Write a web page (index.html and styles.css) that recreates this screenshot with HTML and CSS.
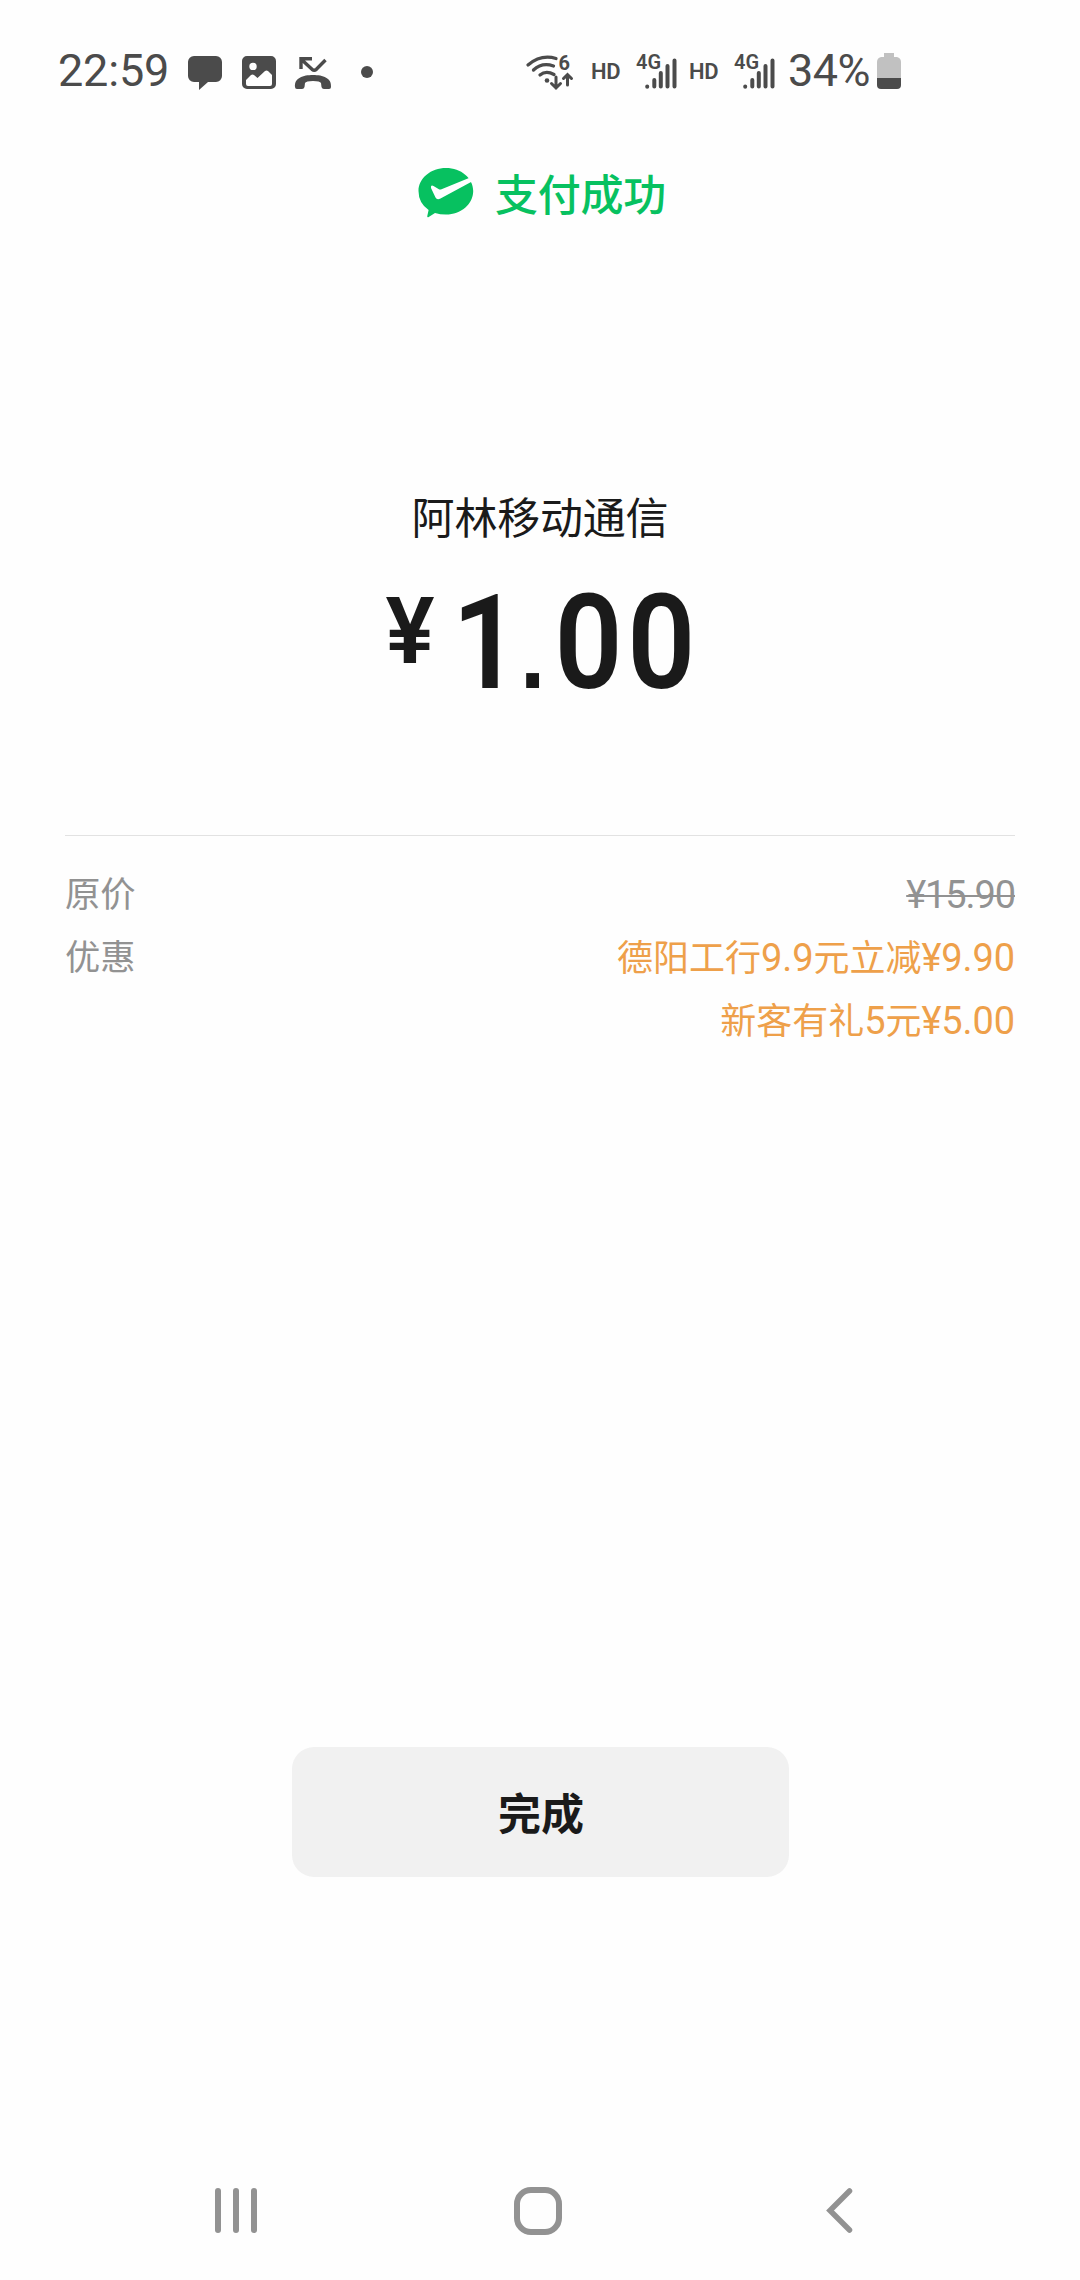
FILE: index.html
```html
<!DOCTYPE html>
<html lang="zh-CN">
<head>
<meta charset="utf-8">
<title>支付成功</title>
<link rel="stylesheet" href="styles.css">
</head>
<body>
<div class="screen">
  <header class="status-bar">
    <span class="clock">22:59</span>
    <svg class="notifications" width="192" height="40" viewBox="184 50 192 40" fill="#4b4b4b">
      <path d="M194 55H216a6 6 0 0 1 6 6V75a6 6 0 0 1-6 6H208L199 89V81H194a6 6 0 0 1-6-6V61a6 6 0 0 1 6-6Z"/>
      <path fill-rule="evenodd" d="M247 55H271a5 5 0 0 1 5 5V83a5 5 0 0 1-5 5H247a5 5 0 0 1-5-5V60a5 5 0 0 1 5-5ZM253 61.700a3.700 3.700 0 1 0 0 7.400a3.700 3.700 0 1 0 0-7.400ZM246 79V83Q246 85 248 85H270Q272 85 272 83V74L268 70Q266.500 69 265 70L257.500 77L254 74Q252.500 73 251 74Z"/>
      <path d="M301 68V57.800H312M302 59L312 68.300Q314.200 70 316.400 68.300L325.500 59" fill="none" stroke="#4b4b4b" stroke-width="3.400"/>
      <path d="M295 86C294 77 303 74 313 74S332 77 331 86Q331 88 329 88H324Q322 88 321.500 86L321 82Q320 80 313 80T305 82L304.500 86Q304 88 302 88H297Q295 88 295 86Z"/>
      <circle cx="367" cy="71" r="6"/>
    </svg>
    <svg class="wifi" width="50" height="40" viewBox="525 50 50 40" fill="none" stroke="#4b4b4b" stroke-width="3.300" stroke-linecap="round">
      <path d="M528 64Q541 53 556 57.500M533.500 69Q542 61 553.500 65M540 74Q546 69 554 73.500"/>
      <circle cx="547" cy="79.500" r="2.300" fill="#4b4b4b" stroke="none"/>
      <path d="M556 76V87M551.500 82.500L556 87L560.500 82.500M567.500 84V73.500M563.500 77.500L567.500 73.500L571.500 77.500" stroke-width="3"/>
      <text class="wifi-version" x="558.500" y="69">6</text>
    </svg>
    <span class="hd">HD</span>
    <span class="network"><span class="generation">4G</span><svg class="signal" width="32" height="32" viewBox="0 0 32 32" stroke="#4b4b4b" stroke-width="4" stroke-linecap="round"><path d="M2.200 28.600V28.700M9.300 22V28.500M15.800 15V28.500M22.500 8V28.500M29.500 2.500V28.500"/></svg></span>
    <span class="hd">HD</span>
    <span class="network"><span class="generation">4G</span><svg class="signal" width="32" height="32" viewBox="0 0 32 32" stroke="#4b4b4b" stroke-width="4" stroke-linecap="round"><path d="M2.200 28.600V28.700M9.300 22V28.500M15.800 15V28.500M22.500 8V28.500M29.500 2.500V28.500"/></svg></span>
    <span class="percent">34%</span>
    <svg width="24" height="36" viewBox="0 0 24 36"><path d="M7 0H17V4H20Q24 5 24 9V25H0V9Q0 5 4 4H7Z" fill="#c1c1c1"/><path d="M0 25H24V32Q24 36 20 36H4Q0 36 0 32Z" fill="#4b4b4b"/></svg>
  </header>

  <main class="payment">
    <div class="result">
      <svg width="56" height="50" viewBox="418 168 56 50">
        <path fill="#07c160" d="M446 168C461 168 473.200 178 473.200 191S461 214.500 446 214.500Q440 214.500 435 213L428.300 217.200Q427 217.500 427.300 216L428.600 210Q418.500 203 418.500 191C418.500 178 431 168 446 168Z"/>
        <path fill="#fff" d="M469 178L441.500 189.200Q440 190 438.500 189L433.500 186Q430.500 184.500 431 188L435.500 197.500Q437 200.500 440.500 198.500L472 181.500Z"/>
      </svg>
      <span>支付成功</span>
    </div>
    <div class="merchant">阿林移动通信</div>
    <div class="amount"><span class="currency">¥</span><span class="figures"><span class="one">1</span><span class="point">.</span>00</span></div>
    <section class="details">
      <div class="row"><span>原价</span><s class="number original">¥15.90</s></div>
      <div class="row"><span>优惠</span><span class="discount">德阳工行<span class="number">9.9</span>元立减<span class="number">¥9.90</span></span></div>
      <div class="row last"><span class="discount">新客有礼<span class="number">5</span>元<span class="number">¥5.00</span></span></div>
    </section>
    <button class="done">完成</button>
  </main>

  <nav class="navigation">
    <svg width="42" height="46" viewBox="0 0 42 46" fill="#929292"><rect width="6" height="45" rx="3"/><rect x="18" width="6" height="45" rx="3"/><rect x="36" width="6" height="45" rx="3"/></svg>
    <svg class="home" width="48" height="48" viewBox="0 0 48 48"><rect x="3" y="3" width="42" height="42" rx="14" fill="none" stroke="#929292" stroke-width="6"/></svg>
    <svg width="28" height="46" viewBox="0 0 28 46"><path d="M23.500 3L4 22.500L23.500 42" fill="none" stroke="#929292" stroke-width="5.500" stroke-linecap="round"/></svg>
  </nav>
</div>
</body>
</html>
```
FILE: styles.css
```css
* { box-sizing: border-box; }
body { margin: 0; background: #fefefe; font-family: Roboto, "Noto Sans CJK SC", sans-serif; }
svg { display: block; flex: none; }
.screen { width: 1080px; height: 2280px; display: flex; flex-direction: column; }
.status-bar { height: 142px; padding-left: 58px; display: flex; align-items: center; color: #4b4b4b; white-space: nowrap; }
.clock { width: 126px; font-size: 45px; line-height: 54px; letter-spacing: -.2px; }
.notifications { margin-right: 149px; }
.wifi { margin-right: 16px; }
.wifi-version { font-size: 20px; font-weight: 700; fill: #4b4b4b; stroke: none; }
.hd { width: 45px; font-size: 22px; font-weight: 600; letter-spacing: -.3px; }
.network { display: flex; width: 41px; height: 40px; margin-right: 11px; }
.network + .hd { margin-left: 1px; }
.generation { width: 9px; font-size: 20px; line-height: 22px; font-weight: 600; }
.signal { margin-top: 7px; }
.percent { width: 89px; font-size: 45px; line-height: 54px; letter-spacing: -.6px; margin-left: 2px; }
.payment { flex: 1; display: flex; flex-direction: column; align-items: center; }
.result { height: 100px; margin-left: 4px; display: flex; gap: 21px; color: #07c160; font-size: 43px; font-weight: 500; line-height: 52px; padding-top: 26px; letter-spacing: -.3px; }
.result span { margin-top: 2px; }
.merchant { margin-top: 246px; height: 62px; color: #1a1a1a; font-size: 43px; line-height: 62px; letter-spacing: -.2px; }
.amount { width: 309px; height: 150px; margin-top: 19px; display: flex; color: #1a1a1a; font-size: 131px; font-weight: 600; line-height: 148px; }
.currency { flex: none; width: 66.5px; font-size: 92px; line-height: 126px; }
.figures { flex: none; letter-spacing: 5px; transform: scaleX(.91); transform-origin: left; white-space: nowrap; }
.one { letter-spacing: 0; }
.point { margin-right: 5px; font-family: "Liberation Sans", sans-serif; font-size: 100px; font-weight: 700; line-height: 1; }
.details { width: 950px; height: 230px; margin-top: 116px; padding-top: 28px; border-top: 1px solid #e2e2e2; color: #929292; font-size: 35.300px; }
.row { height: 63px; display: flex; justify-content: space-between; line-height: 63px; }
.last { justify-content: flex-end; }
.number { font-size: 38px; letter-spacing: -.1px; }
.original { letter-spacing: -1.1px; text-decoration-thickness: 2px; }
.discount { color: #eea04a; font-size: 36px; }
.done { width: 497px; height: 130px; margin-top: 682px; padding: 6px 0 0 2px; border: 0; border-radius: 22px; background: #f1f1f1; color: #1a1a1a; font: 600 43px/62px Roboto, "Noto Sans CJK SC", sans-serif; }
.navigation { height: 138px; padding: 0 226px 0 215px; display: flex; align-items: center; justify-content: space-between; }
.home { margin-right: 7px; }
```
